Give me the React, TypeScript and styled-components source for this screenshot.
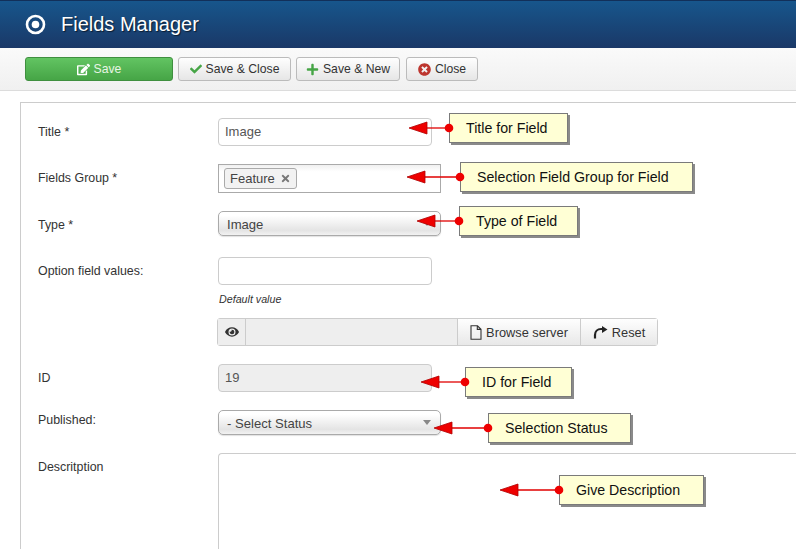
import React from 'react';
import styled, { createGlobalStyle } from 'styled-components';
import { FaCheck, FaEdit, FaEye, FaPlus, FaTimes, FaTimesCircle } from 'react-icons/fa';

const GlobalStyle = createGlobalStyle`
  html, body {
    margin: 0;
    background: #fff;
    font-family: "Liberation Sans", Arial, sans-serif;
    color: #333;
  }
`;

const Page = styled.div`
  position: relative;
  width: 796px;
  height: 549px;
  overflow: hidden;
`;

const Header = styled.header`
  display: flex;
  align-items: center;
  gap: 15px;
  height: 48px;
  box-sizing: border-box;
  padding: 0 0 1px 25px;
  background: linear-gradient(#17568c, #1a3867);
  border-top: 1px solid #12305a;
`;

const Title = styled.h1`
  margin: 0;
  font-size: 20px;
  font-weight: 400;
  color: #fff;
  text-shadow: 1px 1px 1px rgba(0, 0, 0, 0.6);
`;

const Toolbar = styled.div`
  display: flex;
  gap: 5px;
  height: 43px;
  box-sizing: border-box;
  padding: 9px 0 0 25px;
  background: linear-gradient(#fafafa, #f0f0f0);
  border-bottom: 1px solid #dcdcdc;
`;

const ToolButton = styled.button<{ $width: number; $primary?: boolean }>`
  display: flex;
  align-items: center;
  justify-content: center;
  gap: 4px;
  width: ${(p) => p.$width}px;
  height: 24px;
  padding: 0;
  font: 12.2px "Liberation Sans", Arial, sans-serif;
  border-radius: 3px;
  color: ${(p) => (p.$primary ? '#e8f5e4' : '#333')};
  background: ${(p) =>
    p.$primary ? 'linear-gradient(#62c462, #46a546)' : 'linear-gradient(#fefefe, #e6e6e6)'};
  border: 1px solid ${(p) => (p.$primary ? '#3f8f3f' : '#bbb')};
  &:last-child {
    margin-left: 1px;
  }
`;

const Panel = styled.main`
  margin: 11px 0 0 20px;
  padding: 15px 0 0 17px;
  border-top: 1px solid #ccc;
  border-left: 1px solid #ccc;
`;

const Row = styled.div<{ $gap?: number }>`
  display: grid;
  grid-template-columns: 180px 1fr;
  margin-bottom: ${(p) => p.$gap ?? 18}px;
`;

const Label = styled.label<{ $top?: number }>`
  padding-top: ${(p) => p.$top ?? 7}px;
  font-size: 12.4px;
  line-height: 14px;
  color: #333;
`;

const TextBox = styled.div<{ $disabled?: boolean }>`
  width: 214px;
  height: 28px;
  box-sizing: border-box;
  padding: 0 6px;
  font-size: 13px;
  line-height: 26px;
  color: #555;
  background: ${(p) => (p.$disabled ? '#eee' : '#fff')};
  border: 1px solid #ccc;
  border-radius: 4px;
`;

const TagBox = styled.div`
  display: flex;
  align-items: center;
  width: 223px;
  height: 29px;
  box-sizing: border-box;
  padding-left: 5px;
  border: 1px solid #aaa;
  background: linear-gradient(#f0f0f0, #fff 25%);
`;

const Tag = styled.span`
  display: flex;
  align-items: center;
  gap: 5px;
  height: 21px;
  box-sizing: border-box;
  padding: 0 5px;
  font-size: 13px;
  color: #444;
  background: #f2f2f2;
  border: 1px solid #aaa;
  border-radius: 3px;
  svg {
    color: #777;
  }
`;

const SelectBox = styled.div`
  position: relative;
  width: 223px;
  height: 25px;
  box-sizing: border-box;
  padding: 0 8px;
  font-size: 13.1px;
  line-height: 25px;
  color: #444;
  background: linear-gradient(#fff 15%, #e4e4e4 80%, #f2f2f2);
  border: 1px solid #aaa;
  border-radius: 5px;
  box-shadow: 0 1px 1px rgba(0, 0, 0, 0.12);
  &::after {
    content: '';
    position: absolute;
    top: 9px;
    right: 9px;
    border-style: solid;
    border-width: 5px 4px 0;
    border-color: #888 transparent transparent;
  }
`;

const FieldStack = styled.div`
  display: flex;
  flex-direction: column;
`;

const HelpText = styled.em`
  margin: 8px 0 12px 1px;
  font-size: 10.7px;
  line-height: 13px;
  color: #333;
`;

const MediaGroup = styled.div`
  display: flex;
  width: 441px;
  height: 28px;
  margin-left: -1px;
  box-sizing: border-box;
  border: 1px solid #ccc;
  border-radius: 3px;
`;

const MediaEye = styled.span`
  display: flex;
  align-items: center;
  justify-content: center;
  width: 27px;
  background: #eee;
  border-right: 1px solid #ccc;
  color: #333;
`;

const MediaPath = styled.span`
  flex: 1;
  background: #eee;
`;

const MediaButton = styled.span<{ $width: number }>`
  display: flex;
  align-items: center;
  justify-content: center;
  gap: 4px;
  width: ${(p) => p.$width}px;
  box-sizing: border-box;
  font-size: 12.8px;
  color: #333;
  background: linear-gradient(#fefefe, #e8e8e8);
  border-left: 1px solid #ccc;
`;

const TextArea = styled.div`
  height: 200px;
  border: 1px solid #ccc;
  border-right: 0;
  border-radius: 4px 0 0 0;
`;

const CalloutWrap = styled.div<{ $x: number; $y: number }>`
  position: absolute;
  left: ${(p) => p.$x}px;
  top: ${(p) => p.$y}px;
  display: flex;
  align-items: center;
`;

const CalloutBox = styled.div<{ $width: number }>`
  display: flex;
  align-items: center;
  width: ${(p) => p.$width}px;
  height: 30px;
  box-sizing: border-box;
  padding-left: 16px;
  font-size: 14.2px;
  color: #111;
  white-space: nowrap;
  background: #ffffd5;
  border: 1px solid #7a7a7a;
  box-shadow: 2px 2px 0 #8a8a8a;
`;

function Pointer({ length }: { length: number }) {
  return (
    <svg width={length + 5} height={14} viewBox={`0 0 ${length + 5} 14`} style={{ marginRight: -5, zIndex: 1 }}>
      <line x1={18} y1={7} x2={length} y2={7} stroke="#e00000" strokeWidth={1.3} />
      <polygon points="1,7 19,1 19,13" fill="#ee0000" stroke="#b00000" strokeWidth={0.8} />
      <circle cx={length} cy={7} r={4.3} fill="#ee0000" />
    </svg>
  );
}

function Callout(props: { tip: number; top: number; boxLeft: number; boxWidth: number; text: string }) {
  return (
    <CalloutWrap $x={props.tip} $y={props.top}>
      <Pointer length={props.boxLeft - props.tip} />
      <CalloutBox $width={props.boxWidth}>{props.text}</CalloutBox>
    </CalloutWrap>
  );
}

function FileIcon() {
  return (
    <svg width={12} height={15} viewBox="0 0 12 15">
      <path d="M1 .8h6.5L11 4.3v9.9H1zM7.3 1v3.4H11" fill="none" stroke="#333" strokeWidth={1.1} />
    </svg>
  );
}

function RepeatIcon() {
  return (
    <svg width={15} height={13} viewBox="0 0 15 13">
      <path d="M2 12.5V9c0-3.4 2.5-6 6-6h2" fill="none" stroke="#222" strokeWidth={2.2} />
      <polygon points="9,0 14.5,3.4 9,7" fill="#222" />
    </svg>
  );
}

const callouts = [
  { tip: 408, top: 113, boxLeft: 449, boxWidth: 119, text: 'Title for Field' },
  { tip: 406, top: 162, boxLeft: 460, boxWidth: 233, text: 'Selection Field Group for Field' },
  { tip: 416, top: 206, boxLeft: 459, boxWidth: 119, text: 'Type of Field' },
  { tip: 420, top: 367, boxLeft: 465, boxWidth: 107, text: 'ID for Field' },
  { tip: 433, top: 413, boxLeft: 488, boxWidth: 143, text: 'Selection Status' },
  { tip: 499, top: 475, boxLeft: 559, boxWidth: 145, text: 'Give Description' },
];

export default function App() {
  return (
    <Page>
      <GlobalStyle />
      <Header>
        <svg width={21} height={21} viewBox="0 0 21 21">
          <circle cx={10.5} cy={10.5} r={8.5} fill="none" stroke="#fff" strokeWidth={2.6} />
          <circle cx={10.5} cy={10.5} r={3.8} fill="#fff" />
        </svg>
        <Title>Fields Manager</Title>
      </Header>
      <Toolbar>
        <ToolButton $primary $width={148}>
          <FaEdit size={13} color="#fff" /> Save
        </ToolButton>
        <ToolButton $width={113}>
          <FaCheck size={12} color="#46a546" /> Save &amp; Close
        </ToolButton>
        <ToolButton $width={104}>
          <FaPlus size={13} color="#46a546" /> Save &amp; New
        </ToolButton>
        <ToolButton $width={72}>
          <FaTimesCircle size={13} color="#bd362f" /> Close
        </ToolButton>
      </Toolbar>
      <Panel>
        <Row>
          <Label>Title *</Label>
          <TextBox>Image</TextBox>
        </Row>
        <Row>
          <Label>Fields Group *</Label>
          <TagBox>
            <Tag>
              Feature <FaTimes size={11} />
            </Tag>
          </TagBox>
        </Row>
        <Row $gap={21}>
          <Label>Type *</Label>
          <SelectBox>Image</SelectBox>
        </Row>
        <Row>
          <Label>Option field values:</Label>
          <FieldStack>
            <TextBox />
            <HelpText>Default value</HelpText>
            <MediaGroup>
              <MediaEye>
                <FaEye size={14} />
              </MediaEye>
              <MediaPath />
              <MediaButton $width={123}>
                <FileIcon /> Browse server
              </MediaButton>
              <MediaButton $width={77}>
                <RepeatIcon /> Reset
              </MediaButton>
            </MediaGroup>
          </FieldStack>
        </Row>
        <Row>
          <Label>ID</Label>
          <TextBox $disabled>19</TextBox>
        </Row>
        <Row>
          <Label $top={3}>Published:</Label>
          <SelectBox>- Select Status</SelectBox>
        </Row>
        <Row $gap={0}>
          <Label>Descritption</Label>
          <TextArea />
        </Row>
      </Panel>
      {callouts.map((c) => (
        <Callout key={c.text} {...c} />
      ))}
    </Page>
  );
}
